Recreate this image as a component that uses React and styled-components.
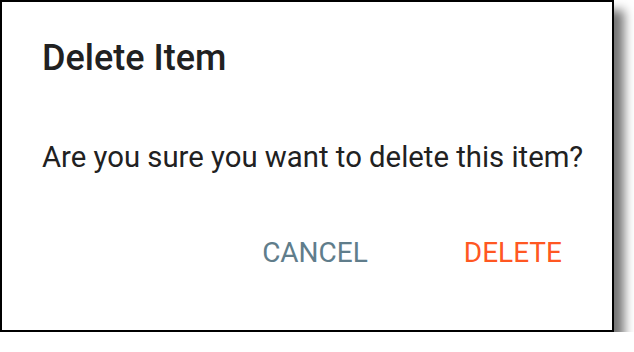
import React from "react";
import styled, { createGlobalStyle } from "styled-components";

const GlobalStyle = createGlobalStyle`
  html, body {
    margin: 0;
    padding: 0;
    background: #ffffff;
  }
  body {
    font-family: Roboto, "Liberation Sans", sans-serif;
  }
`;

const Dialog = styled.div`
  box-sizing: border-box;
  width: 614px;
  height: 332px;
  border: 2px solid #000000;
  background: #ffffff;
  box-shadow: 10px 10px 10px rgba(0, 0, 0, 0.55);
  display: flex;
  flex-direction: column;
  padding: 0 20px 0 40px;
`;

const Title = styled.h2`
  margin: 0;
  padding-top: 34px;
  font-size: 36px;
  line-height: 44px;
  font-weight: 500;
  color: #212121;
`;

const Message = styled.p`
  margin: 0;
  padding-top: 57px;
  font-size: 29.3px;
  line-height: 40px;
  white-space: nowrap;
  color: #212121;
`;

const Actions = styled.div`
  display: flex;
  justify-content: flex-end;
  gap: 96px;
  padding-top: 58px;
  padding-right: 30px;
`;

const ActionButton = styled.button`
  border: none;
  background: none;
  padding: 0;
  font-family: inherit;
  font-size: 28px;
  line-height: 36px;
  text-transform: uppercase;
  color: ${p => (p.$danger ? "#ff5722" : "#607d8b")};
  cursor: pointer;
`;

export default function App() {
  return (
    <>
      <GlobalStyle />
      <Dialog>
        <Title>Delete Item</Title>
        <Message>Are you sure you want to delete this item?</Message>
        <Actions>
          <ActionButton>Cancel</ActionButton>
          <ActionButton $danger>Delete</ActionButton>
        </Actions>
      </Dialog>
    </>
  );
}
